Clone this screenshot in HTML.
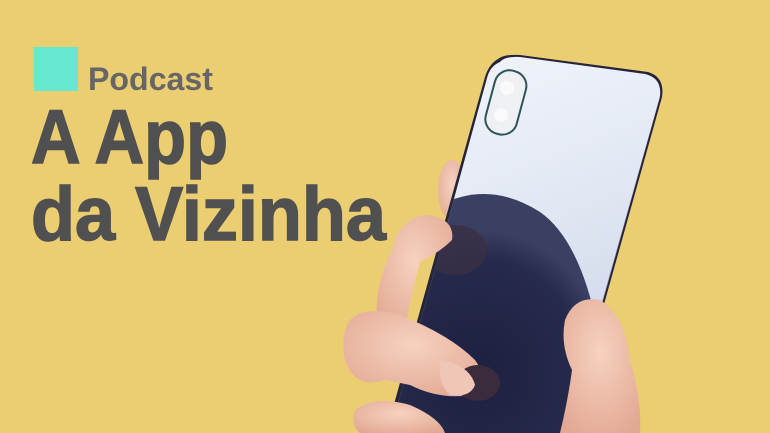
<!DOCTYPE html>
<html><head><meta charset="utf-8"><style>
html,body{margin:0;padding:0;}
body{width:770px;height:433px;overflow:hidden;background:#EBCE72;}
svg{display:block}
</style></head><body>
<svg width="770" height="433" viewBox="0 0 770 433" xmlns="http://www.w3.org/2000/svg">
<defs>
<linearGradient id="scr" x1="0" y1="0" x2="0.3" y2="1">
<stop offset="0" stop-color="#f4f6fb"/><stop offset="0.5" stop-color="#e2e8f3"/><stop offset="1" stop-color="#c9d4e8"/>
</linearGradient>
<radialGradient id="dk" cx="0.45" cy="0.75" r="0.6">
<stop offset="0" stop-color="#1d2040"/><stop offset="0.8" stop-color="#262a4c"/><stop offset="1" stop-color="#3a4062"/>
</radialGradient>
<radialGradient id="skin" cx="0.5" cy="0.4" r="0.7">
<stop offset="0" stop-color="#f6d2bf"/><stop offset="1" stop-color="#e2a893"/>
</radialGradient>
<clipPath id="ph"><path d="M500 62 Q505 56 520 57 L645 74 Q662 78 660 96 L565 433 L390 433 L487 78 Q490 66 500 62Z"/></clipPath>
</defs>
<rect width="770" height="433" fill="#EBCE72"/>
<rect x="34" y="47" width="44" height="44" fill="#66E8CF"/>
<text x="88" y="90" font-family="Liberation Sans, sans-serif" font-weight="bold" font-size="32" fill="#666666" textLength="125" lengthAdjust="spacingAndGlyphs">Podcast</text>
<text x="31" y="163" font-family="Liberation Sans, sans-serif" font-weight="bold" font-size="76" fill="#505050" stroke="#505050" stroke-width="1.5" textLength="197" lengthAdjust="spacingAndGlyphs">A App</text>
<text x="31" y="240" font-family="Liberation Sans, sans-serif" font-weight="bold" font-size="76" fill="#505050" stroke="#505050" stroke-width="1.5" textLength="355" lengthAdjust="spacingAndGlyphs">da Vizinha</text>
<ellipse cx="452" cy="190" rx="14" ry="30" fill="url(#skin)"/>
<path d="M498 59 Q504 54 520 55 L648 72 Q665 77 662 97 L568 433 L386 433 L485 77 Q489 64 498 59Z" fill="#25243a"/>
<path d="M660 97 L566 433 L562 433 L656 97Z" fill="#9a98b0"/>
<g clip-path="url(#ph)">
<rect x="380" y="50" width="300" height="400" fill="url(#scr)"/>
<path d="M440 205 Q490 180 540 212 Q580 240 598 330 L570 433 L380 433 Z" fill="url(#dk)"/>
<ellipse cx="455" cy="250" rx="32" ry="25" fill="#3a2f45" opacity="0.8"/>
</g>
<rect x="490" y="70" width="32" height="65" rx="15" transform="rotate(15 506 102)" fill="#eef0f4" stroke="#2d5558" stroke-width="2"/>
<circle cx="507" cy="88" r="7" fill="#fafafa"/><circle cx="501" cy="115" r="7" fill="#fafafa"/>
<path d="M392 250 Q400 215 430 215 Q455 220 452 240 Q440 252 420 262 Q410 300 405 330 L378 330 Q372 290 392 250Z" fill="url(#skin)"/>
<path d="M350 320 Q365 305 400 315 Q450 335 475 360 Q490 380 470 395 Q440 400 410 385 L385 380 Q355 390 345 360 Q340 335 350 320Z" fill="url(#skin)"/>
<ellipse cx="478" cy="383" rx="22" ry="18" fill="#3a2c3c"/>
<path d="M440 360 Q470 365 475 385 Q470 398 450 395 Q438 385 440 360Z" fill="#f0c7b6"/>
<path d="M355 410 Q375 395 410 405 Q440 418 445 433 L360 433 Q350 425 355 410Z" fill="url(#skin)"/>
<path d="M565 320 Q575 295 600 300 Q625 315 630 360 Q642 400 640 433 L560 433 Q568 400 572 370 Q560 345 565 320Z" fill="url(#skin)"/>
</svg>
</body></html>
